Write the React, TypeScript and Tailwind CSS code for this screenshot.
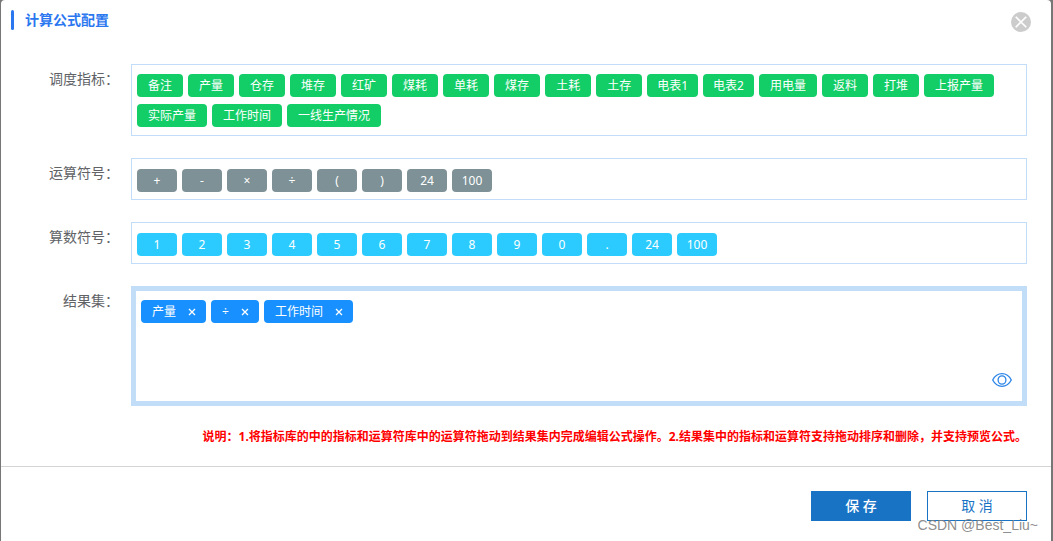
import { useState } from 'react';
import clsx from 'clsx';

const indicators = [
  '备注', '产量', '仓存', '堆存', '红矿', '煤耗', '单耗', '煤存', '土耗', '土存',
  '电表1', '电表2', '用电量', '返料', '打堆', '上报产量', '实际产量', '工作时间', '一线生产情况',
];

const operators = ['+', '-', '×', '÷', '(', ')', '24', '100'];

const numbers = ['1', '2', '3', '4', '5', '6', '7', '8', '9', '0', '.', '24', '100'];

function CloseMark({ className }: { className: string }) {
  return (
    <svg viewBox="0 0 8 8" className={className} fill="none" stroke="currentColor" aria-hidden="true">
      <path d="M1 1l6 6M7 1L1 7" />
    </svg>
  );
}

function EyeIcon() {
  return (
    <svg viewBox="0 0 20 14" className="w-5 h-3.5" fill="none" stroke="currentColor" strokeWidth="1.3" aria-hidden="true">
      <path d="M0.7 7C2.8 3 6.1 0.7 10 0.7S17.2 3 19.3 7C17.2 11 13.9 13.3 10 13.3S2.8 11 0.7 7z" />
      <ellipse cx="10" cy="7" rx="3.9" ry="4.2" />
    </svg>
  );
}

function Field({ label, children }: { label: string; children: React.ReactNode }) {
  return (
    <div className="flex items-start">
      <div className="w-[130px] shrink-0 pr-3 pt-[3px] text-right text-sm leading-6 text-[#606266]">{label}</div>
      <div className="flex-1 min-w-0">{children}</div>
    </div>
  );
}

function TagList({ items, fixed, tagClass, className }: {
  items: string[];
  fixed?: boolean;
  tagClass: string;
  className: string;
}) {
  return (
    <ul className={clsx('flex flex-wrap gap-x-[5px] gap-y-[7px] border border-[#c2ddf8] px-[5px]', className)}>
      {items.map((item) => (
        <li
          key={item}
          draggable
          className={clsx(
            'h-[23px] rounded text-center text-xs leading-[23px] text-white cursor-move',
            // names that end in a digit get slightly tighter padding
            fixed ? 'w-10' : /\d$/.test(item) ? 'px-2.5' : 'px-[11px]',
            tagClass,
          )}
        >
          {item}
        </li>
      ))}
    </ul>
  );
}

export default function App() {
  const [result, setResult] = useState(['产量', '÷', '工作时间']);

  return (
    <div className="min-h-screen bg-[#777777] pl-px pr-0.5 font-['Noto_Sans','Noto_Sans_CJK_SC',sans-serif]">
      <div className="relative min-h-screen rounded-t-sm bg-white">
        <header className="flex items-start justify-between pl-2.5 pr-5 pt-2.5">
          <div className="flex items-center gap-[11px]">
            <span className="h-5 w-[3px] rounded-xs bg-[#2b77f0]" />
            <h1 className="text-sm leading-5 font-bold text-[#2b77f0]">计算公式配置</h1>
          </div>
          <button
            type="button"
            aria-label="关闭"
            className="mt-0.5 flex size-5 items-center justify-center rounded-full bg-[#cccccc] text-white"
          >
            <CloseMark className="size-3.5" />
          </button>
        </header>

        <main className="flex flex-col gap-[22px] pr-6 pt-8">
          <Field label="调度指标：">
            <TagList items={indicators} tagClass="bg-[#13ce66]" className="pt-[9px] pb-2" />
          </Field>
          <Field label="运算符号：">
            <TagList items={operators} fixed tagClass="bg-[#7d9196]" className="pt-2.5 pb-[7px]" />
          </Field>
          <Field label="算数符号：">
            <TagList items={numbers} fixed tagClass="bg-[#2bcbff]" className="pt-2.5 pb-[7px]" />
          </Field>
          <Field label="结果集：">
            <div className="flex min-h-[120px] flex-col justify-between border-5 border-[#c2ddf8] px-[5px] pt-[9px] pb-3.5">
              <ul className="flex flex-wrap gap-[5px]">
                {result.map((item) => (
                  <li
                    key={item}
                    draggable
                    className="flex h-[23px] items-center gap-3 rounded bg-[#1890ff] pl-[11px] pr-2.5 text-xs leading-[23px] text-white"
                  >
                    {item}
                    <button
                      type="button"
                      aria-label={`删除${item}`}
                      onClick={() => setResult(result.filter((r) => r !== item))}
                    >
                      <CloseMark className="size-2 stroke-[1.3]" />
                    </button>
                  </li>
                ))}
              </ul>
              <button type="button" aria-label="预览公式" className="mr-[5px] self-end text-[#2b85e8]">
                <EyeIcon />
              </button>
            </div>
          </Field>
        </main>

        <p className="mt-[21px] pl-6 pr-6 text-right text-xs leading-5 font-bold text-[#ff0000]">
          说明：1.将指标库的中的指标和运算符库中的运算符拖动到结果集内完成编辑公式操作。2.结果集中的指标和运算符支持拖动排序和删除，并支持预览公式。
        </p>

        <footer className="mt-[19px] flex justify-end gap-4 border-t border-[#d4d4d4] pr-6 pt-6">
          <button type="button" className="h-[30px] w-[100px] bg-[#1973c5] text-sm font-medium text-white">
            保 存
          </button>
          <button type="button" className="h-[30px] w-[100px] border border-[#1973c5] text-sm text-[#1973c5]">
            取 消
          </button>
        </footer>

        <span className="pointer-events-none absolute right-[13px] bottom-1.5 font-['Liberation_Sans',sans-serif] text-sm leading-5 text-[#808080]/90">
          CSDN @Best_Liu~
        </span>
      </div>
    </div>
  );
}
